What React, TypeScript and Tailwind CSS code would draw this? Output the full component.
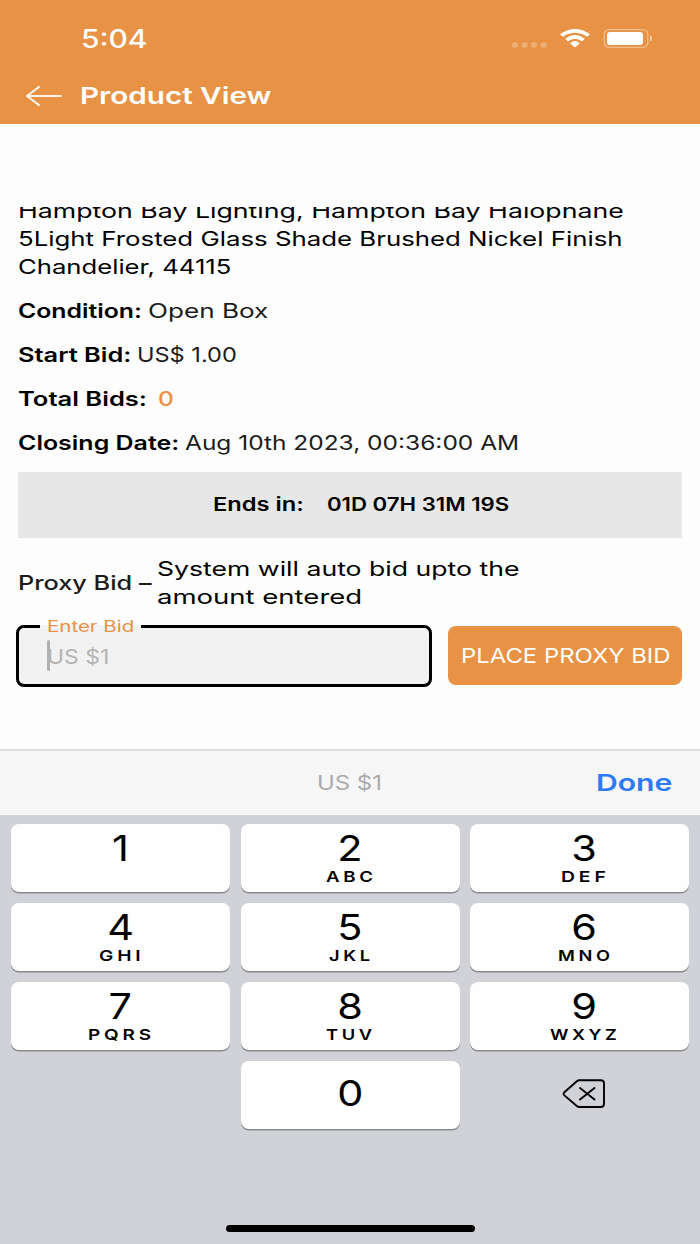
import React, { useLayoutEffect, useRef, useState } from 'react';
import { clsx } from 'clsx';

interface FitTextProps {
    className?: string;
    children: string;
}

// Stretches a single line of text to the width of its box
function FitText({ className, children }: FitTextProps) {
    const box = useRef<HTMLSpanElement>(null);
    const text = useRef<HTMLSpanElement>(null);
    const [scale, setScale] = useState(1);

    useLayoutEffect(() => {
        if (!box.current || !text.current) return;
        setScale(box.current.offsetWidth / text.current.offsetWidth);
    }, [children]);

    return (
        <span ref={box} className={clsx('block shrink-0 text-left whitespace-nowrap', className)}>
            <span ref={text} className="inline-block origin-left align-top" style={{ transform: `scaleX(${scale})` }}>
                {children}
            </span>
        </span>
    );
}

function StatusBar() {
    return (
        <div className="flex h-[68px] items-start justify-between pl-[81px] pr-[48px]">
            <FitText className="mt-[23px] w-[67px] text-[25px] leading-[32px] font-medium">5:04</FitText>
            <svg className="mt-[26px]" width="142" height="24" viewBox="0 0 142 24" fill="none">
                <g fill="#fff" fillOpacity="0.27">
                    <rect x="2" y="16.2" width="6" height="5.6" rx="2" />
                    <rect x="11.7" y="16.2" width="6" height="5.6" rx="2" />
                    <rect x="21" y="16.2" width="6" height="5.6" rx="2" />
                    <rect x="30.7" y="16.2" width="6" height="5.6" rx="2" />
                </g>
                <path d="M50 8.2Q65 -2.2 80 8.2L77.3 10.8Q65 2.8 52.7 10.8Z" fill="#fff" />
                <path d="M55.2 12.8Q65 5.2 74.8 12.8L72 15.5Q65 10.1 58 15.5Z" fill="#fff" />
                <path d="M60.2 17.4Q65 12.8 69.8 17.4L65 21.5Z" fill="#fff" />
                <rect x="94.2" y="3.6" width="43.6" height="17.8" rx="5" stroke="#fff" strokeOpacity="0.4" strokeWidth="1.3" />
                <rect x="97" y="6" width="36" height="13" rx="3" fill="#fff" />
                <path d="M140 9.3c3.4 1 3.4 5 0 6Z" fill="#fff" fillOpacity="0.5" />
            </svg>
        </div>
    );
}

function Header() {
    return (
        <header className="h-[124px] bg-[#e79244] text-white">
            <StatusBar />
            <div className="flex h-[56px] items-center pl-[25px]">
                <svg width="38" height="22" viewBox="0 0 38 22" fill="none" stroke="#fff" strokeOpacity="0.88" strokeWidth="2.1" strokeLinecap="round" strokeLinejoin="round">
                    <path d="M36 11H2M14 1.8L2 11L14 20.2" />
                </svg>
                <FitText className="ml-[17px] w-[192px] text-[23px] leading-[56px] font-semibold">Product View</FitText>
            </div>
        </header>
    );
}

const details = [
    { label: 'Condition:', labelWidth: 'w-[124px]', value: 'Open Box', valueWidth: 'ml-[6px] w-[120px]' },
    { label: 'Start Bid:', labelWidth: 'w-[113px]', value: 'US$ 1.00', valueWidth: 'ml-[6px] w-[100px]' },
    { label: 'Total Bids:', labelWidth: 'w-[129px]', value: '0', valueWidth: 'ml-[11px] w-[16px] text-[#e79244] font-medium' },
    { label: 'Closing Date:', labelWidth: 'w-[161px]', value: 'Aug 10th 2023, 00:36:00 AM', valueWidth: 'ml-[6px] w-[334px]' },
];

function BidForm() {
    return (
        <div className="-mt-px flex items-start justify-between">
            <fieldset className="-mt-[9px] -ml-[2px] flex h-[70px] w-[416px] rounded-lg border-3 border-black bg-[#f2f2f2] pl-[28px]">
                <legend className="-ml-[7px] pr-[7px] pl-[7px] text-[#e79244]">
                    <FitText className="w-[87px] text-[16px] leading-[19px]">Enter Bid</FitText>
                </legend>
                <div className="mt-[4px] flex h-[31px] items-center">
                    <span className="h-[31px] w-[3px] rounded-sm bg-[#b0b0b0]" />
                    <FitText className="-ml-[3px] w-[62px] pt-[3px] text-[20px] leading-[31px] text-[#b4b4b4]">US $1</FitText>
                </div>
            </fieldset>
            <button className="flex h-[59px] w-[234px] justify-center rounded-lg bg-[#e79244] text-white">
                <FitText className="w-[209px] text-[20px] leading-[60px]">PLACE PROXY BID</FitText>
            </button>
        </div>
    );
}

function ProductDetails() {
    return (
        <main className="mt-[83px] flex h-[542px] flex-col gap-4 overflow-hidden px-[18px] text-[20px] leading-[28px]">
            <div className="-mt-[10px]">
                <FitText className="w-[606px]">Hampton Bay Lighting, Hampton Bay Halophane</FitText>
                <FitText className="w-[605px]">5Light Frosted Glass Shade Brushed Nickel Finish</FitText>
                <FitText className="w-[213px]">Chandelier, 44115</FitText>
            </div>

            {details.map((d) => (
                <div key={d.label} className="flex">
                    <FitText className={clsx('font-semibold', d.labelWidth)}>{d.label}</FitText>
                    <FitText className={clsx('text-[#1c1c1c]', d.valueWidth)}>{d.value}</FitText>
                </div>
            ))}

            <div className="-mt-px flex h-[66px] shrink-0 bg-[#e7e7e7] pl-[195px] text-[19px] leading-[66px] font-semibold">
                <FitText className="w-[91px]">Ends in:</FitText>
                <FitText className="ml-[23px] w-[182px]">01D 07H 31M 19S</FitText>
            </div>

            <div className="mt-px flex items-center">
                <FitText className="w-[134px] font-medium text-[#1c1c1c]">Proxy Bid –</FitText>
                <div className="ml-[5px]">
                    <FitText className="w-[362px]">System will auto bid upto the</FitText>
                    <FitText className="w-[205px]">amount entered</FitText>
                </div>
            </div>

            <BidForm />
        </main>
    );
}

interface KeyProps {
    digit: string;
    letters?: string;
    className?: string;
}

function Key({ digit, letters, className }: KeyProps) {
    return (
        <button className="flex h-[68px] flex-col items-center rounded-[8px] bg-[#fefefe] shadow-[0_1.5px_0_#898a8d] nth-[3n]:pl-[10px]">
            <span className={clsx('scale-x-115 text-[36px] leading-[36px]', digit === '0' ? 'mt-[14px]' : 'mt-[6px]')}>{digit}</span>
            {letters && (
                <FitText className={clsx('mt-[2px] ml-[2px] text-[15px] leading-[18px] font-semibold tracking-[3px]', className)}>
                    {letters}
                </FitText>
            )}
        </button>
    );
}

const keys = [
    { digit: '1' },
    { digit: '2', letters: 'ABC', className: 'w-[51px]' },
    { digit: '3', letters: 'DEF', className: 'w-[49px]' },
    { digit: '4', letters: 'GHI', className: 'w-[46px]' },
    { digit: '5', letters: 'JKL', className: 'w-[45px]' },
    { digit: '6', letters: 'MNO', className: 'w-[56px]' },
    { digit: '7', letters: 'PQRS', className: 'w-[67px]' },
    { digit: '8', letters: 'TUV', className: 'w-[50px]' },
    { digit: '9', letters: 'WXYZ', className: 'w-[71px]' },
];

function Keyboard() {
    return (
        <div className="flex flex-1 flex-col bg-[#d1d2d8]">
            <div className="flex h-[66px] items-center border-t-2 border-[#e0e0e1] bg-[#f6f6f6]">
                <FitText className="ml-[317px] w-[65px] text-[19.5px] leading-[64px] text-[#ababab]">US $1</FitText>
                <FitText className="ml-[214px] w-[76px] text-[23px] leading-[64px] font-semibold text-[#2e79f6]">Done</FitText>
            </div>
            <div className="mt-[9px] grid grid-cols-3 gap-x-[10.5px] gap-y-[11px] px-[11px]">
                {keys.map((k) => (
                    <Key key={k.digit} {...k} />
                ))}
                <span />
                <Key digit="0" />
                <div className="flex h-[66px] items-center justify-center pl-[9px]">
                    <svg width="44" height="32" viewBox="0 0 44 32" fill="none" stroke="#000" strokeWidth="1.9" strokeLinecap="round" strokeLinejoin="round">
                        <path d="M17.5 2.2H38.5Q42 2.2 42 5.2V26Q42 29 38.5 29H17.5Q16 29 14.8 28L2.4 17.4Q0.8 15.8 2.4 14.2L14.8 3.2Q16 2.2 17.5 2.2Z" />
                        <path d="M18 10L32.5 21.6M32.5 10L18 21.6" />
                    </svg>
                </div>
            </div>
            <div className="mt-auto mb-[12px] h-[7px] w-[249px] self-center rounded-full bg-black" />
        </div>
    );
}

export default function App() {
    return (
        <div className="flex h-[1244px] w-[700px] flex-col overflow-hidden bg-[#fdfdfd] font-['Inter',sans-serif] text-black">
            <Header />
            <ProductDetails />
            <Keyboard />
        </div>
    );
}
